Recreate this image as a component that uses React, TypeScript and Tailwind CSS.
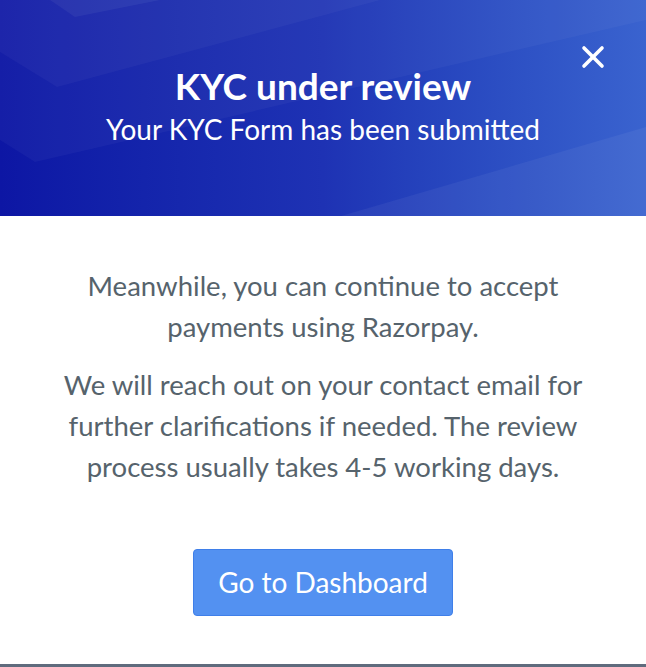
import { X } from "lucide-react";

function HeaderPattern() {
  return (
    <svg
      className="absolute inset-0 h-full w-full"
      viewBox="0 0 646 216"
      preserveAspectRatio="none"
    >
      <polygon points="50,0 75,17 160,0" fill="#ffffff" fillOpacity="0.05" />
      <polygon points="0,0 0,52 57,87 380,0" fill="#ffffff" fillOpacity="0.035" />
      <polygon points="0,0 0,140 35,162 646,20 646,0" fill="#ffffff" fillOpacity="0.035" />
      <polygon points="341,216 646,127 646,216" fill="#ffffff" fillOpacity="0.05" />
    </svg>
  );
}

export default function App() {
  return (
    <div className="flex min-h-[667px] w-full flex-col bg-white font-['Lato',sans-serif]">
      <div className="relative flex h-[216px] flex-col items-center justify-center overflow-hidden bg-gradient-to-r from-[#0d16a4] via-[#1e32b4] to-[#3a63cf] pb-[6px]">
        <HeaderPattern />
        <button className="absolute right-[35px] top-[39px] text-white">
          <X size={36} strokeWidth={2.4} />
        </button>
        <h1 className="relative text-[37px] font-bold leading-[42px] text-white">KYC under review</h1>
        <p className="relative mt-[5px] text-[28px] leading-[34px] text-white">Your KYC Form has been submitted</p>
      </div>

      <div className="mx-auto flex w-[536px] flex-1 flex-col items-center pt-[49px] text-center text-[27.5px] leading-[41px] text-[#56636c]">
        <p className="px-[28px]">Meanwhile, you can continue to accept payments using Razorpay.</p>
        <p className="mt-[17px]">
          We will reach out on your contact email for further clarifications if needed. The review process usually takes 4-5 working days.
        </p>
        <button className="mt-[62px] h-[67px] w-[260px] rounded-[4px] border border-[#3f7fe9] bg-[#5391f1] text-[28px] text-white">
          Go to Dashboard
        </button>
      </div>

      <div className="h-[3px] bg-[#5f6b7d]" />
    </div>
  );
}
